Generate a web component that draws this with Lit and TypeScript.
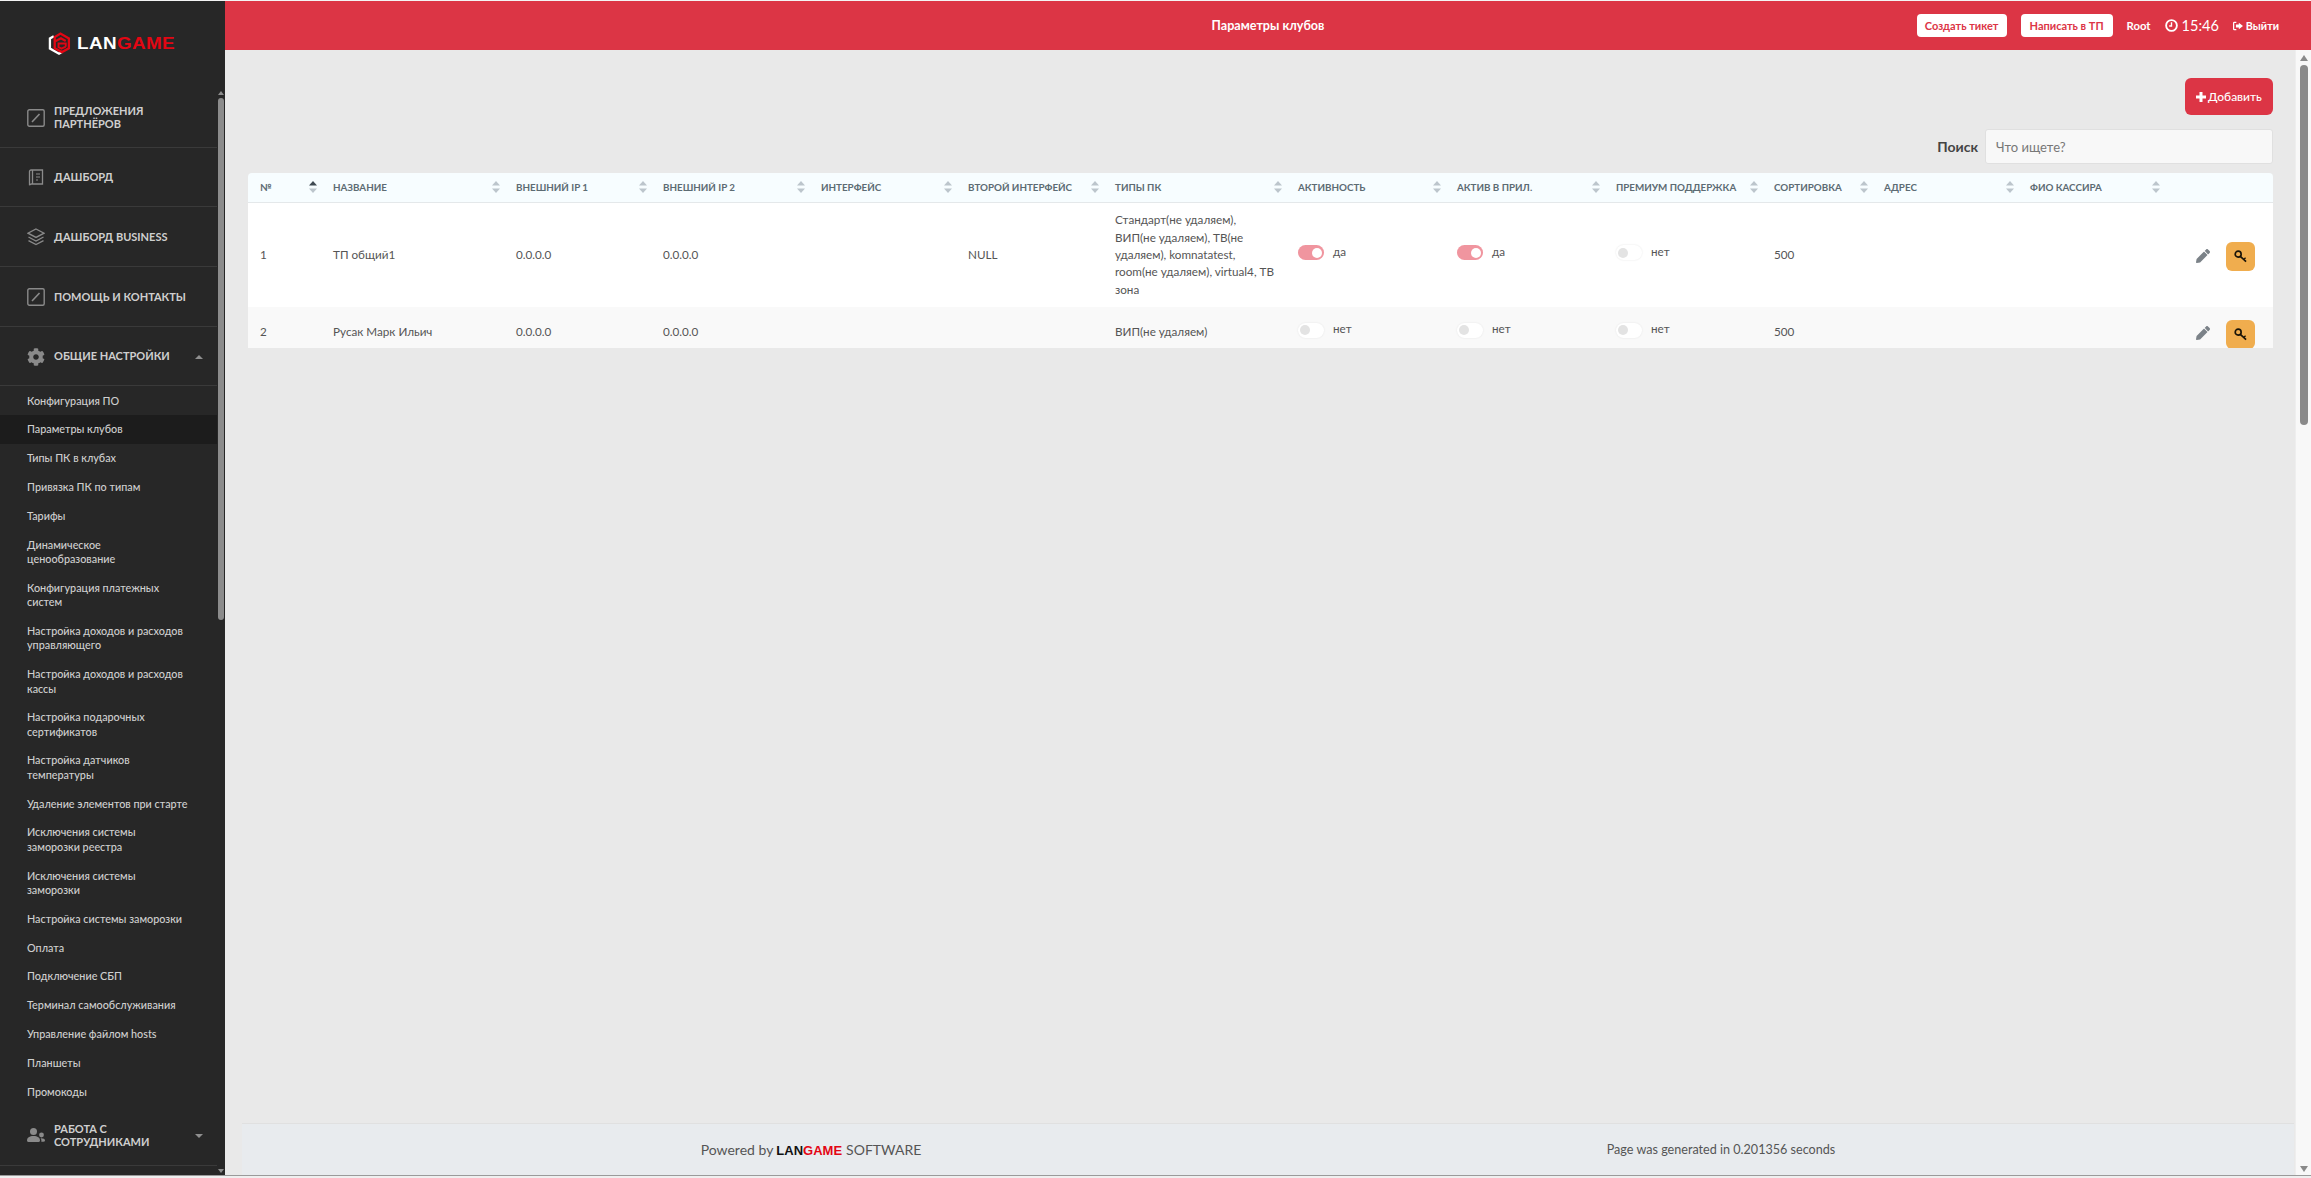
import { LitElement, html, css, svg } from "lit";
import { customElement } from "lit/decorators.js";

const sub = [
  "Конфигурация ПО", "Параметры клубов", "Типы ПК в клубах", "Привязка ПК по типам", "Тарифы",
  "Динамическое ценообразование", "Конфигурация платежных систем", "Настройка доходов и расходов управляющего",
  "Настройка доходов и расходов кассы", "Настройка подарочных сертификатов", "Настройка датчиков температуры",
  "Удаление элементов при старте", "Исключения системы заморозки реестра", "Исключения системы заморозки",
  "Настройка системы заморозки", "Оплата", "Подключение СБП", "Терминал самообслуживания",
  "Управление файлом hosts", "Планшеты", "Промокоды",
];

const editIcon = html`<svg class="mi" viewBox="0 0 18 18" fill="none" stroke="#8a8a8a" stroke-width="1.4"><rect x="0.8" y="0.8" width="16.4" height="16.4" rx="1.5"/><path d="M5 13 L12.5 5" stroke-width="1.6"/></svg>`;
const bookIcon = html`<svg class="mi" viewBox="0 0 18 18" fill="none" stroke="#8a8a8a" stroke-width="1.3"><path d="M2.5 2.5 A1.5 1.5 0 0 1 4 1h11.5v14H4.5a2 2 0 0 0-2 1.2z"/><path d="M5.5 1v14"/><path d="M9 5h4M9 8h4M9 11h2" stroke-width="1.2"/></svg>`;
const layersIcon = html`<svg class="mi" viewBox="0 0 18 18" fill="none" stroke="#8a8a8a" stroke-width="1.3"><path d="M9 1 L17 5.2 L9 9.4 L1 5.2 Z"/><path d="M1.5 9 L9 13 L16.5 9"/><path d="M1.5 12.6 L9 16.6 L16.5 12.6"/></svg>`;
const gearIcon = html`<svg class="mi" viewBox="0 0 512 512" fill="#8a8a8a"><path d="M487.4 315.7l-42.6-24.6c4.3-23.2 4.3-47 0-70.2l42.6-24.6c4.9-2.8 7.1-8.6 5.5-14-11.1-35.6-30-67.8-54.7-94.6-3.8-4.1-10-5.1-14.8-2.3L380.8 110c-17.9-15.4-38.5-27.3-60.8-35.1V25.8c0-5.6-3.9-10.5-9.4-11.7-36.7-8.2-74.3-7.8-109.2 0-5.5 1.2-9.4 6.1-9.4 11.7V75c-22.2 7.9-42.8 19.8-60.8 35.1L88.7 85.5c-4.9-2.8-11-1.9-14.8 2.3-24.7 26.7-43.6 58.9-54.7 94.6-1.7 5.4.6 11.2 5.5 14L67.3 221c-4.3 23.2-4.3 47 0 70.2l-42.6 24.6c-4.9 2.8-7.1 8.6-5.5 14 11.1 35.6 30 67.8 54.7 94.6 3.8 4.1 10 5.1 14.8 2.3l42.6-24.6c17.9 15.4 38.5 27.3 60.8 35.1v49.2c0 5.6 3.9 10.5 9.4 11.7 36.7 8.2 74.3 7.8 109.2 0 5.5-1.2 9.4-6.1 9.4-11.7v-49.2c22.2-7.9 42.8-19.8 60.8-35.1l42.6 24.6c4.9 2.8 11 1.9 14.8-2.3 24.7-26.7 43.6-58.9 54.7-94.6 1.5-5.5-.7-11.3-5.6-14.1zM256 336c-44.1 0-80-35.9-80-80s35.9-80 80-80 80 35.9 80 80-35.9 80-80 80z"/></svg>`;
const usersIcon = html`<svg class="mi" viewBox="0 0 18 18" fill="#8a8a8a"><circle cx="6.5" cy="4.5" r="3.5"/><path d="M0 13.5C0 10.5 2.5 9 6.5 9s6.5 1.5 6.5 4.5c0 1-1 1.5-2 1.5H2c-1 0-2-.5-2-1.5z"/><circle cx="14.5" cy="8" r="2.4"/><path d="M14 11.3c2.5 0 4 .7 4 2.3 0 .8-.7 1.2-1.6 1.2H14.300c.3-1.300 0-2.600-.8-3.500z"/></svg>`;

const logoMark = html`<svg class="lm" viewBox="0 0 24 24" fill="none" stroke-width="2.4">
  <path d="M6 4.500 L2 6.800 V17.200 L11.500 22.600 L15 20.600" stroke="#fff"/>
  <path d="M7 10 V5.300 L13 1.600 L21.800 6.700 V17 L14.500 21 L7 17 V10 L13.500 6.500 L18.500 9.300" stroke="#e30613"/>
  <path d="M18.500 15.300 L14 17.300 L11 15.800 V12 H18.500 V15.300" stroke="#e30613" stroke-width="2"/>
</svg>`;

const sortIcon = (active = false) => svg`<svg class="sort" viewBox="0 0 8 12"><path d="M4 0 L8 4.600 H0 Z" fill="${active ? "#3f4a52" : "#bcc5cc"}"/><path d="M0 7.400 H8 L4 12 Z" fill="#bcc5cc"/></svg>`;

const cols = [
  ["№", 73, true], ["Название", 183], ["Внешний IP 1", 147], ["Внешний IP 2", 158], ["Интерфейс", 147],
  ["Второй интерфейс", 147], ["Типы ПК", 183], ["Активность", 159], ["Актив в прил.", 159], ["Премиум поддержка", 158],
  ["Сортировка", 110], ["Адрес", 146], ["ФИО кассира", 146],
] as [string, number, boolean?][];

const rows = [
  { n: "1", name: "ТП общий1", ip1: "0.0.0.0", ip2: "0.0.0.0", i2: "NULL", types: "Стандарт(не удаляем), ВИП(не удаляем), ТВ(не удаляем), komnatatest, room(не удаляем), virtual4, ТВ зона", a: true, b: true, c: false },
  { n: "2", name: "Русак Марк Ильич", ip1: "0.0.0.0", ip2: "0.0.0.0", i2: "", types: "ВИП(не удаляем)", a: false, b: false, c: false },
];

const toggle = (on: boolean) => html`<span class="tg-wrap"><span class="tg ${on ? "on" : ""}"><i></i></span><span class="tl">${on ? "да" : "нет"}</span></span>`;

@customElement("app-root")
export class AppRoot extends LitElement {
  static styles = css`
    :host { display: flex; flex-direction: column; height: 100vh; overflow: hidden; background: #fff; font-family: Lato, "Noto Sans", sans-serif; color: #555; }
    * { box-sizing: border-box; }
    .topline { height: 1px; flex: none; background: #f4f4f4; }
    .bottomline { height: 3px; flex: none; background: #efefef; border-top: 1px solid #9a9a9a; }
    .body { flex: 1; min-height: 0; display: flex; }

    .side { width: 225px; flex: none; background: #272727; display: flex; flex-direction: column; min-height: 0; }
    .logo { height: 87px; flex: none; display: flex; align-items: flex-start; padding: 31px 0 0 48px; gap: 6px; }
    .lm { width: 23px; height: 23px; flex: none; }
    .logo b { font: 700 16px/23px "Liberation Sans", sans-serif; letter-spacing: 0.300px; color: #fff; display: inline-block; transform: scaleX(1.180); transform-origin: left; }
    .logo b span { color: #e30613; }
    .side-body { flex: 1; min-height: 0; display: flex; }
    nav { width: 217px; flex: none; overflow: hidden; }
    .m { height: 59.700px; border-bottom: 1px solid #3a3a3a; display: flex; align-items: center; padding: 1px 12px 0 27px; gap: 9px; color: #cfcfcf; font-size: 11px; font-weight: 700; line-height: 12.500px; text-transform: uppercase; }
    .m .t { flex: 1; min-width: 0; }
    .mi { width: 18px; height: 18px; flex: none; }
    .caret { width: 0; height: 0; border-left: 4px solid transparent; border-right: 4px solid transparent; margin-right: 2px; }
    .caret.up { border-bottom: 4px solid #8f8f8f; }
    .caret.down { border-top: 4px solid #8f8f8f; }
    .sub { padding: 0; margin: 0; list-style: none; }
    .sub li { padding: 7.200px 27px 7.200px 27px; font-size: 10.800px; line-height: 14.400px; font-weight: 500; color: #cfcfcf; }
    .sub li.act { background: #1c1c1c; }
    .sb { width: 8px; flex: none; display: flex; flex-direction: column; align-items: center; padding-top: 3px; }
    .sb .thumb { width: 6px; height: 522px; background: #8c8c8c; border-radius: 3px; margin-top: 3px; }
    .sb .tri-u { border-left: 3.500px solid transparent; border-right: 3.500px solid transparent; border-bottom: 4px solid #8c8c8c; }
    .sb .tri-d { border-left: 3.500px solid transparent; border-right: 3.500px solid transparent; border-top: 4px solid #8c8c8c; margin-top: auto; margin-bottom: 2px; }

    .main { flex: 1; min-width: 0; display: flex; flex-direction: column; }
    .top { height: 49px; flex: none; background: #dc3545; display: grid; grid-template-columns: 1fr auto 1fr; align-items: center; padding: 0 32px; color: #fff; font-weight: 700; font-size: 11.300px; }
    .title { grid-column: 2; font-size: 12.600px; }
    .tools { grid-column: 3; display: flex; align-items: center; justify-content: flex-end; }
    .tbtn { height: 23px; background: #fff; color: #dc3545; border-radius: 4px; display: flex; align-items: center; justify-content: center; font-size: 11px; font-weight: 700; width: 90px; }
    .tbtn + .tbtn { margin-left: 14px; width: 92px; }
    .root { margin-left: 14px; }
    .clock { margin-left: 14px; display: flex; align-items: center; gap: 4px; font-size: 14.500px; font-weight: 400; }
    .clock svg { width: 13px; height: 13px; }
    .out { margin-left: 14px; display: flex; align-items: center; gap: 3px; font-size: 10.800px; }
    .out svg { width: 10px; height: 10px; }

    .mainbody { flex: 1; min-height: 0; display: flex; }
    .content { flex: 1; min-width: 0; background: #e9e9e9; display: flex; flex-direction: column; }
    .inner { flex: 1; min-height: 0; padding: 28px 22px 0 23px; display: flex; flex-direction: column; }
    .actions { display: flex; justify-content: flex-end; }
    .add { width: 88px; height: 37px; background: #dc3545; color: #fff; border-radius: 6px; display: flex; align-items: center; justify-content: center; gap: 2px; font-size: 12px; font-weight: 500; }
    .searchrow { display: flex; justify-content: flex-end; align-items: center; gap: 7px; margin-top: 14px; font-size: 14px; font-weight: 700; color: #444; }
    .search { width: 288px; height: 35px; background: #f8f8f8; border: 1px solid #e0e0e0; border-radius: 3px; display: flex; align-items: center; padding: 0 10px; color: #777; font-size: 13px; font-weight: 400; }
    .tablewrap { margin-top: 9px; height: 175px; overflow: hidden; border-radius: 4px 4px 0 0; }
    table { border-collapse: collapse; table-layout: fixed; width: 2025.500px; }
    th { height: 29px; background: #f7fdff; border-bottom: 1px solid #e4e8ea; padding: 0 4px 0 12px; text-align: left; font-size: 9.800px; font-weight: 700; color: #5c6b73; text-transform: uppercase; white-space: nowrap; }
    th div { display: flex; align-items: center; justify-content: space-between; }
    .sort { width: 8px; height: 12px; flex: none; }
    td { padding: 0 0 0 12px; font-size: 11.700px; line-height: 17.400px; color: #555; background: #fff; vertical-align: middle; }
    tr.r1 td { height: 105px; }
    tr.r2 td { height: 50px; background: #f9f9f9; }
    td.types { padding-right: 12px; }
    .tg-wrap { display: flex; align-items: center; gap: 9px; position: relative; top: -2px; }
    .tg { width: 26px; height: 15px; border-radius: 8px; background: #fff; box-shadow: 0 0 2px #e4e4e4; display: flex; align-items: center; padding: 0 2px; }
    .tg i { width: 10px; height: 10px; border-radius: 50%; background: #e3e3e3; }
    .tg.on { background: #f0959f; justify-content: flex-end; box-shadow: none; }
    .tg.on i { background: #fff; }
    .tl { font-size: 11.700px; position: relative; top: -1px; }
    .ac { display: flex; align-items: center; justify-content: flex-end; gap: 16px; padding-right: 19px; position: relative; top: 2px; }
    .ac svg.p { width: 14px; height: 14px; position: relative; top: -1px; }
    .key { width: 29px; height: 29px; background: #f0ad4e; border-radius: 6px; display: flex; align-items: center; justify-content: center; }
    .key svg { width: 13px; height: 13px; }
    .spacer { flex: 1; }
    .foot { height: 52px; flex: none; margin-left: 17px; margin-right: 1px; background: #e8ebee; border-top: 1px solid #e0e0e0; display: grid; grid-template-columns: 1fr 1fr; padding: 0 118px 0 114px; align-items: center; text-align: center; font-size: 14px; color: #555; }
    .foot .r { font-size: 12.600px; }
    .foot .lg { font: 700 13px "Liberation Sans", sans-serif; color: #111; margin: 0 4px 0 3px; }
    .foot .lg span { color: #e30613; }
    .pagesb { width: 16px; flex: none; background: #f8f8f8; display: flex; flex-direction: column; align-items: center; padding-top: 5px; border-left: 1px solid #eee; }
    .pagesb .tri-u { border-left: 4px solid transparent; border-right: 4px solid transparent; border-bottom: 6px solid #8a8a8a; }
    .pagesb .thumb { width: 8px; height: 360px; border-radius: 4px; background: #8a8a8a; margin-top: 4px; }
    .pagesb .tri-d { border-left: 4px solid transparent; border-right: 4px solid transparent; border-top: 6px solid #8a8a8a; margin-top: auto; margin-bottom: 3px; }
  `;

  render() {
    return html`
      <div class="topline"></div>
      <div class="body">
        <aside class="side">
          <div class="logo">${logoMark}<b>LAN<span>GAME</span></b></div>
          <div class="side-body">
            <nav>
              <div class="m">${editIcon}<span class="t">Предложения партнёров</span></div>
              <div class="m">${bookIcon}<span class="t">Дашборд</span></div>
              <div class="m">${layersIcon}<span class="t">Дашборд Business</span></div>
              <div class="m">${editIcon}<span class="t">Помощь и контакты</span></div>
              <div class="m">${gearIcon}<span class="t">Общие настройки</span><span class="caret up"></span></div>
              <ul class="sub">${sub.map((s) => html`<li class=${s === "Параметры клубов" ? "act" : ""}>${s}</li>`)}</ul>
              <div class="m">${usersIcon}<span class="t">Работа с<br />сотрудниками</span><span class="caret down"></span></div>
            </nav>
            <div class="sb"><span class="tri-u"></span><span class="thumb"></span><span class="tri-d"></span></div>
          </div>
        </aside>
        <div class="main">
          <header class="top">
            <div class="title">Параметры клубов</div>
            <div class="tools">
              <div class="tbtn">Создать тикет</div>
              <div class="tbtn">Написать в ТП</div>
              <div class="root">Root</div>
              <div class="clock"><svg viewBox="0 0 14 14" fill="none" stroke="#fff" stroke-width="2"><circle cx="7" cy="7" r="5.800"/><path d="M7 3.500V7.500H4.500" stroke-width="1.500"/></svg>15:46</div>
              <div class="out"><svg viewBox="0 0 12 10" fill="#fff"><path d="M4 0H1.500A1.500 1.500 0 0 0 0 1.500v7A1.500 1.500 0 0 0 1.500 10H4V8.500H1.500v-7H4z"/><path d="M7 1 L12 5 L7 9 V6.800 H3.500 V3.200 H7z"/></svg>Выйти</div>
            </div>
          </header>
          <div class="mainbody">
            <div class="content">
              <div class="inner">
                <div class="actions"><div class="add"><svg width="10" height="10" viewBox="0 0 10 10" fill="#fff"><path d="M3.500 0h3v3.500H10v3H6.500V10h-3V6.500H0v-3h3.500z"/></svg>Добавить</div></div>
                <div class="searchrow"><span>Поиск</span><div class="search">Что ищете?</div></div>
                <div class="tablewrap">
                  <table>
                    <colgroup>${cols.map((c) => html`<col style="width:${c[1]}px" />`)}<col style="width:109.500px" /></colgroup>
                    <thead><tr>${cols.map((c) => html`<th><div><span>${c[0]}</span>${sortIcon(!!c[2])}</div></th>`)}<th></th></tr></thead>
                    <tbody>
                      ${rows.map((r, i) => html`<tr class="r${i + 1}">
                        <td>${r.n}</td><td>${r.name}</td><td>${r.ip1}</td><td>${r.ip2}</td><td></td><td>${r.i2}</td>
                        <td class="types">${r.types}</td>
                        <td>${toggle(r.a)}</td><td>${toggle(r.b)}</td><td>${toggle(r.c)}</td>
                        <td>500</td><td></td><td></td>
                        <td><div class="ac">
                          <svg class="p" viewBox="0 0 512 512" fill="#7b8288"><path d="M497.900 142.100l-46.100 46.100c-4.700 4.700-12.300 4.700-17 0l-111-111c-4.700-4.700-4.700-12.300 0-17l46.100-46.100c18.700-18.700 49.100-18.700 67.900 0l60.100 60.100c18.800 18.700 18.800 49.100 0 67.900zM284.200 99.800L21.600 362.400.4 483.900c-2.900 16.400 11.400 30.600 27.800 27.800l121.500-21.300 262.600-262.600c4.700-4.700 4.700-12.300 0-17l-111-111c-4.800-4.700-12.400-4.700-17.100 0z"/></svg>
                          <div class="key"><svg viewBox="0 0 14 14" fill="none" stroke="#1a1408" stroke-width="1.800"><circle cx="4.500" cy="4.500" r="3.200"/><path d="M6.800 6.800 L13 12.500"/><path d="M10.500 10 L12.500 8.300" stroke-width="1.500"/></svg></div>
                        </div></td>
                      </tr>`)}
                    </tbody>
                  </table>
                </div>
                <div class="spacer"></div>
              </div>
              <footer class="foot">
                <div>Powered by<span class="lg">LAN<span>GAME</span></span>SOFTWARE</div>
                <div class="r">Page was generated in 0.201356 seconds</div>
              </footer>
            </div>
            <div class="pagesb"><span class="tri-u"></span><span class="thumb"></span><span class="tri-d"></span></div>
          </div>
        </div>
      </div>
      <div class="bottomline"></div>
    `;
  }
}
